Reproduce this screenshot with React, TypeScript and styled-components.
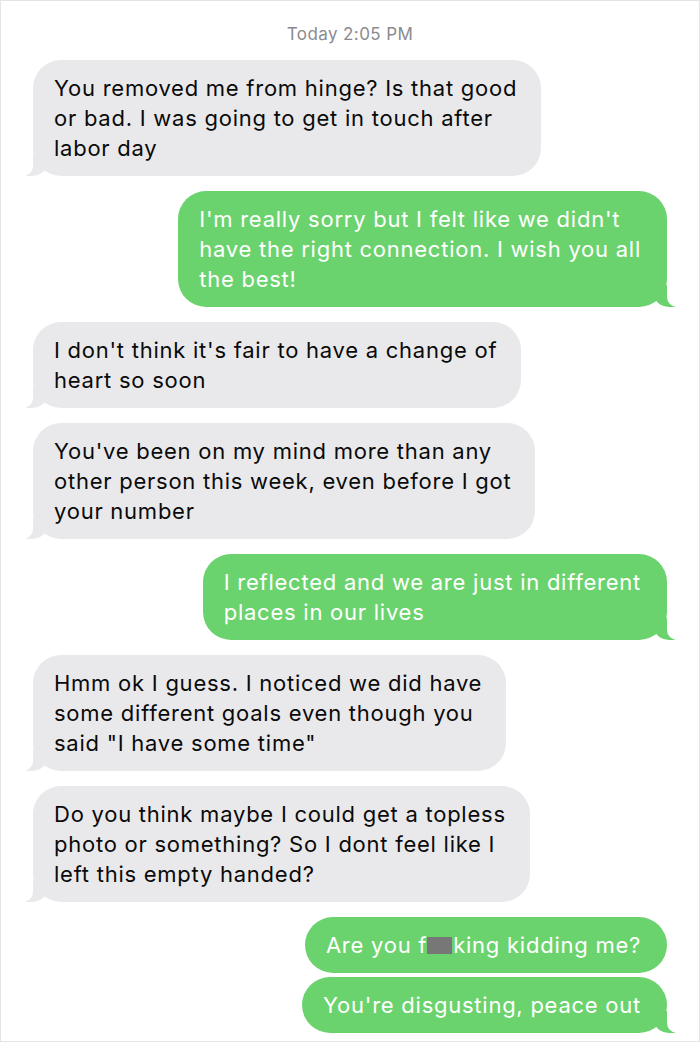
import styled, { createGlobalStyle } from "styled-components";

const GlobalStyle = createGlobalStyle`
  html, body {
    margin: 0;
    padding: 0;
    background: #ffffff;
  }
`;

const Screen = styled.div`
  box-sizing: border-box;
  width: 700px;
  height: 1042px;
  border: 1px solid #e4e4e4;
  background: #ffffff;
  padding: 22px 32px 0 32px;
  display: flex;
  flex-direction: column;
  font-family: Inter, "Liberation Sans", Arial, sans-serif;
  overflow: hidden;
`;

const Stamp = styled.div`
  text-align: center;
  color: #8a8a8e;
  font-size: 17px;
  letter-spacing: 0.4px;
  line-height: 22px;
  margin-bottom: 15px;
`;

const Thread = styled.div`
  display: flex;
  flex-direction: column;
  gap: 15px;
`;

// 같은 사람이 연속으로 보낸 말풍선 묶음
const Group = styled.div`
  display: flex;
  flex-direction: column;
  gap: 4px;
`;

const Bubble = styled.div<{ $mine?: boolean; $tail?: boolean }>`
  position: relative;
  align-self: ${(p) => (p.$mine ? "flex-end" : "flex-start")};
  background: ${(p) => (p.$mine ? "#6bd36e" : "#e9e9eb")};
  color: ${(p) => (p.$mine ? "#ffffff" : "#0a0a0a")};
  font-size: 22px;
  letter-spacing: 0.75px;
  line-height: 30px;
  padding: 13px ${(p) => (p.$mine ? "26px" : "24px")} 13px 21px;
  border-radius: 28px;

  &::before {
    content: "";
    display: ${(p) => (p.$tail ? "block" : "none")};
    position: absolute;
    bottom: 0;
    height: 22px;
    width: 22px;
    background: ${(p) => (p.$mine ? "#6bd36e" : "#e9e9eb")};
    ${(p) =>
      p.$mine
        ? "right: -8px; border-bottom-left-radius: 16px 15px;"
        : "left: -7px; border-bottom-right-radius: 16px 15px;"}
  }
  &::after {
    content: "";
    display: ${(p) => (p.$tail ? "block" : "none")};
    position: absolute;
    bottom: 0;
    width: 12px;
    height: 23px;
    background: #ffffff;
    ${(p) =>
      p.$mine
        ? "right: -12px; border-bottom-left-radius: 10px;"
        : "left: -12px; border-bottom-right-radius: 10px;"}
  }
`;

const Line = styled.span`
  display: block;
  white-space: nowrap;
`;

const Censor = styled.span`
  display: inline-block;
  width: 25px;
  height: 17px;
  margin: 0 1px -1px 0;
  background: #777777;
`;

type Msg = { mine?: boolean; lines: React.ReactNode[] };

const groups: Msg[][] = [
  [
    {
      lines: [
        "You removed me from hinge? Is that good",
        "or bad. I was going to get in touch after",
        "labor day",
      ],
    },
  ],
  [
    {
      mine: true,
      lines: [
        "I'm really sorry but I felt like we didn't",
        "have the right connection. I wish you all",
        "the best!",
      ],
    },
  ],
  [{ lines: ["I don't think it's fair to have a change of", "heart so soon"] }],
  [
    {
      lines: [
        "You've been on my mind more than any",
        "other person this week, even before I got",
        "your number",
      ],
    },
  ],
  [
    {
      mine: true,
      lines: ["I reflected and we are just in different", "places in our lives"],
    },
  ],
  [
    {
      lines: [
        "Hmm ok I guess. I noticed we did have",
        "some different goals even though you",
        'said "I have some time"',
      ],
    },
  ],
  [
    {
      lines: [
        "Do you think maybe I could get a topless",
        "photo or something? So I dont feel like I",
        "left this empty handed?",
      ],
    },
  ],
  [
    {
      mine: true,
      lines: [
        <>
          Are you f<Censor />
          king kidding me?
        </>,
      ],
    },
    { mine: true, lines: ["You're disgusting, peace out"] },
  ],
];

export default function App() {
  return (
    <>
      <GlobalStyle />
      <Screen>
        <Stamp>Today 2:05 PM</Stamp>
        <Thread>
          {groups.map((group, gi) => (
            <Group key={gi}>
              {group.map((msg, mi) => (
                <Bubble
                  key={mi}
                  $mine={msg.mine}
                  $tail={mi === group.length - 1}
                >
                  {msg.lines.map((line, li) => (
                    <Line key={li}>{line}</Line>
                  ))}
                </Bubble>
              ))}
            </Group>
          ))}
        </Thread>
      </Screen>
    </>
  );
}
